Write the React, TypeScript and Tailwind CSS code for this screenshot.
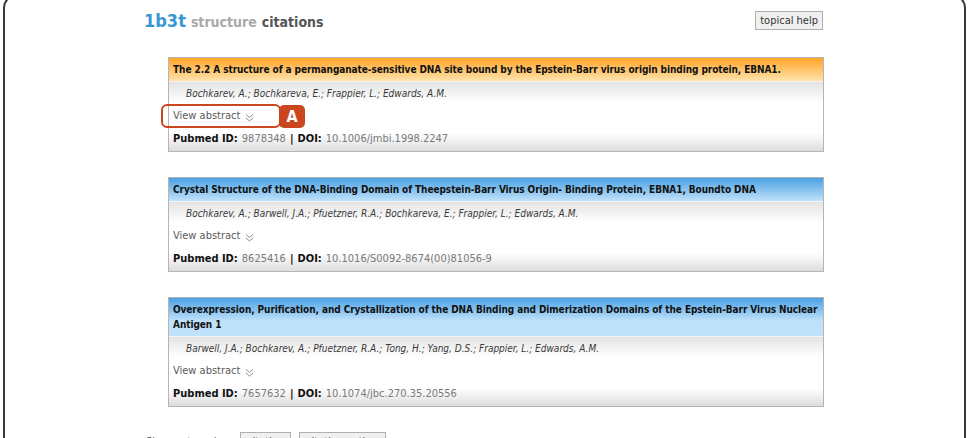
import React from "react";

type Citation = {
  title: string;
  authors: string;
  pubmed: string;
  doi: string;
  tone: "orange" | "blue";
  marked?: boolean;
};

const citations: Citation[] = [
  {
    title:
      "The 2.2 A structure of a permanganate-sensitive DNA site bound by the Epstein-Barr virus origin binding protein, EBNA1.",
    authors: "Bochkarev, A.; Bochkareva, E.; Frappier, L.; Edwards, A.M.",
    pubmed: "9878348",
    doi: "10.1006/jmbi.1998.2247",
    tone: "orange",
    marked: true,
  },
  {
    title:
      "Crystal Structure of the DNA-Binding Domain of Theepstein-Barr Virus Origin- Binding Protein, EBNA1, Boundto DNA",
    authors:
      "Bochkarev, A.; Barwell, J.A.; Pfuetzner, R.A.; Bochkareva, E.; Frappier, L.; Edwards, A.M.",
    pubmed: "8625416",
    doi: "10.1016/S0092-8674(00)81056-9",
    tone: "blue",
  },
  {
    title:
      "Overexpression, Purification, and Crystallization of the DNA Binding and Dimerization Domains of the Epstein-Barr Virus Nuclear Antigen 1",
    authors:
      "Barwell, J.A.; Bochkarev, A.; Pfuetzner, R.A.; Tong, H.; Yang, D.S.; Frappier, L.; Edwards, A.M.",
    pubmed: "7657632",
    doi: "10.1074/jbc.270.35.20556",
    tone: "blue",
  },
];

function DoubleChevron() {
  return (
    <svg width="9" height="9" viewBox="0 0 9 9" className="ml-[5px] mt-[1px]">
      <path d="M1 1.5 L4.5 4.5 L8 1.5 M1 5 L4.5 8 L8 5" fill="none" stroke="#8a8a8a" strokeWidth="1" />
    </svg>
  );
}

function CitationCard({ c }: { c: Citation }) {
  const header =
    c.tone === "orange"
      ? "bg-[linear-gradient(to_bottom,#ffa52a,#ffe3ab_23px)]"
      : "bg-[linear-gradient(to_bottom,#4aa2e4,#c0e1fa_23px)]";
  return (
    <div className="w-[656px] border border-[#b5b5b5] bg-white">
      <div className={`${header} border-b border-[#f4f4f4] px-[4px] py-[4px] text-[10px] font-bold leading-[15px] tracking-[-0.08px] text-[#111]`}>
        {c.title}
      </div>
      <div className="bg-[linear-gradient(to_bottom,#e3e3e3,#ffffff_20px,#ffffff_calc(100%-18px),#dddddd)]">
        <div className="flex h-[23px] items-center pl-[17px] text-[10px] italic text-[#3a3a3a]">{c.authors}</div>
        <div className="relative flex h-[23px] items-center pl-[4px] text-[11px] text-[#5a5a5a]">
          View abstract
          <DoubleChevron />
          {c.marked && (
            <>
              <div className="absolute left-[-8px] top-[-1px] h-[24px] w-[120px] rounded-[6px] border-2 border-[#c9461e]" />
              <div className="absolute left-[110px] top-[0px] flex h-[23px] w-[26px] items-center justify-center rounded-[5px] bg-[#c9461e] text-[16px] font-bold text-white">
                A
              </div>
            </>
          )}
        </div>
        <div className="flex h-[23px] items-center pl-[4px] text-[11px] text-[#111]">
          <span className="font-bold">Pubmed ID:</span>
          <span className="ml-[4px] text-[#7a7a7a]">{c.pubmed}</span>
          <span className="mx-[4px] font-bold">|</span>
          <span className="font-bold">DOI:</span>
          <span className="ml-[4px] text-[#7a7a7a]">{c.doi}</span>
        </div>
      </div>
    </div>
  );
}

export default function App() {
  return (
    <div className="h-[438px] overflow-hidden bg-white font-['DejaVu_Sans_Condensed','DejaVu_Sans',sans-serif]">
      <div className="mx-[3px] mt-[-6px] h-[480px] rounded-[14px] border-2 border-[#3a3a3a]">
        <div className="w-[818px] pl-[139px] pt-[15px]">
          {/* page title + help */}
          <div className="flex h-[19px] items-center justify-between">
            <h1 className="flex items-baseline font-bold leading-none">
              <span className="text-[18px] text-[#3797d3]">1b3t</span>
              <span className="ml-[5px] text-[14px] text-[#a8a8a8]">structure</span>
              <span className="ml-[5px] text-[14px] text-[#555555]">citations</span>
            </h1>
            <button className="h-[19px] border border-[#b0b0b0] bg-[#f0f0f0] px-[4px] text-[11px] leading-none text-[#333]">
              topical help
            </button>
          </div>

          {/* citation list */}
          <div className="ml-[24px] mt-[27px] flex flex-col gap-[25px]">
            {citations.map((c) => (
              <CitationCard key={c.pubmed} c={c} />
            ))}
          </div>

          <div className="ml-[2px] mt-[25px] flex items-center text-[11px] text-[#555]">
            <span>Show categories:</span>
            <button className="ml-[9px] h-[20px] border border-[#b0b0b0] bg-[#f0f0f0] px-[6px] text-[#444]">citation</button>
            <button className="ml-[8px] h-[20px] border border-[#b0b0b0] bg-[#f0f0f0] px-[6px] text-[#444]">citation author</button>
          </div>
        </div>
      </div>
    </div>
  );
}
